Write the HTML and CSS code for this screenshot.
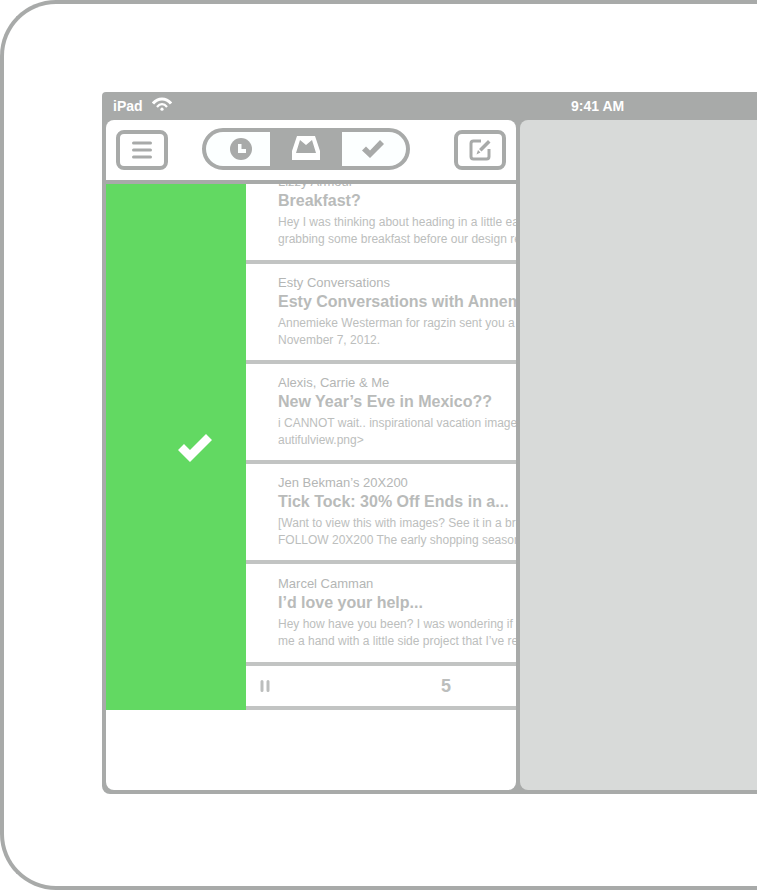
FILE: index.html
```html
<!DOCTYPE html>
<html lang="en">
<head>
<meta charset="utf-8">
<title>Mailbox</title>
<link rel="stylesheet" href="styles.css">
</head>
<body>
<div class="device">
  <div class="screen">
    <header class="status">
      <div class="carrier">
        <span>iPad</span>
        <svg width="20" height="14" viewBox="0 0 20 14" fill="none" stroke="#fff" stroke-width="3">
          <path d="M1 6.500C6 0.500 14 0.500 19 6.500"/>
          <path d="M5 10C8 6.200 12 6.200 15 10" stroke-width="2.200"/>
          <circle cx="10" cy="12.200" r="1.600" fill="#fff" stroke="none"/>
        </svg>
      </div>
      <time class="clock">9:41 AM</time>
    </header>
    <div class="panes">
      <main class="inbox">
        <nav class="toolbar">
          <button class="tool" type="button" aria-label="Menu">
            <svg width="20" height="18" viewBox="0 0 20 18" stroke="#a8aaa9" stroke-width="3" stroke-linecap="round"><path d="M1.500 2h17M1.500 9h17M1.500 16h17"/></svg>
          </button>
          <div class="segments">
            <button class="segment segment-first" type="button" aria-label="Later">
              <svg width="22" height="22" viewBox="0 0 22 22"><circle cx="11" cy="11" r="11" fill="#a8aaa9"/><path d="M8 6h3.500v5H16v4H8z" fill="#fcffff"/></svg>
            </button>
            <button class="segment segment-active" type="button" aria-label="Inbox">
              <svg width="28" height="24" viewBox="0 0 28 24"><path d="M5 0h18l5 15v9H0V15z" fill="#fff"/><path d="M4 17L8 4l6 5 6-5 4 13z" fill="#a8aaa9"/></svg>
            </button>
            <button class="segment segment-last" type="button" aria-label="Done">
              <svg width="22" height="18" viewBox="0 0 22 18"><path d="M0 10.500L4 6.500l4 4L18 0l4 4L8 18z" fill="#a8aaa9"/></svg>
            </button>
          </div>
          <button class="tool tool-end" type="button" aria-label="Compose">
            <svg width="22" height="22" viewBox="0 0 22 22"><path d="M12 2H4.500Q2 2 2 4.500v13Q2 20 4.500 20h13q2.500 0 2.500-2.500V10" fill="none" stroke="#a8aaa9" stroke-width="3"/><path d="M7.500 15.500l1.500-4.500 2.500 2.500zM10 10l9-9 2.500 2.500-9 9z" fill="#a8aaa9"/></svg>
          </button>
        </nav>
        <div class="mail">
          <div class="archive">
            <svg width="34" height="28" viewBox="0 0 34 28"><path d="M0 16l6-6 6 6L28 0l6 6L12 28z" fill="#fff"/></svg>
          </div>
          <div class="list">
            <article class="message message-scrolled">
              <p class="sender">Lizzy Armour</p>
              <h2 class="subject">Breakfast?</h2>
              <p class="preview">Hey I was thinking about heading in a little early<br>grabbing some breakfast before our design review</p>
            </article>
            <article class="message">
              <p class="sender">Esty Conversations</p>
              <h2 class="subject">Esty Conversations with Annemieke</h2>
              <p class="preview">Annemieke Westerman for ragzin sent you a conversation<br>November 7, 2012.</p>
            </article>
            <article class="message">
              <p class="sender">Alexis, Carrie &amp; Me</p>
              <h2 class="subject">New Year’s Eve in Mexico??</h2>
              <p class="preview">i CANNOT wait.. inspirational vacation images<br>autifulview.png&gt;</p>
            </article>
            <article class="message">
              <p class="sender">Jen Bekman’s 20X200</p>
              <h2 class="subject">Tick Tock: 30% Off Ends in a...</h2>
              <p class="preview">[Want to view this with images? See it in a browser<br>FOLLOW 20X200 The early shopping season</p>
            </article>
            <article class="message message-last">
              <p class="sender">Marcel Camman</p>
              <h2 class="subject">I’d love your help...</h2>
              <p class="preview">Hey how have you been? I was wondering if you<br>me a hand with a little side project that I’ve really</p>
            </article>
            <footer class="summary">
              <svg width="10" height="12" viewBox="0 0 10 12" stroke="#bcbebd" stroke-width="3" stroke-linecap="round"><path d="M2 1.500v9M8 1.500v9"/></svg>
              <span class="count">5</span>
            </footer>
          </div>
        </div>
      </main>
      <section class="detail"></section>
    </div>
  </div>
</div>
</body>
</html>
```

FILE: styles.css
```css
* {
  box-sizing: border-box;
}

body {
  margin: 0;
  background: #fff;
  font-family: "Liberation Sans", Arial, sans-serif;
}

h2,
p {
  margin: 0;
}

button {
  margin: 0;
  padding: 0;
  display: flex;
  align-items: center;
  justify-content: center;
}

svg {
  display: block;
  flex: none;
}

.device {
  display: flex;
  min-height: 100vh;
  margin-right: 23px;
  padding: 88px 0 92px 98px;
  border: 4px solid #a8aaa9;
  border-right: 0;
  border-radius: 56px 0 0 56px;
}

.screen {
  flex: 1;
  min-width: 0;
  display: flex;
  flex-direction: column;
  padding: 0 0 4px 4px;
  background: #a8aaa9;
  border-radius: 4px 0 0 8px;
}

.status {
  display: grid;
  grid-template-columns: 458px 1fr;
  align-items: center;
  height: 28px;
  padding-left: 7px;
  color: #fff;
  font-size: 14px;
  font-weight: bold;
}

.carrier {
  display: flex;
  align-items: center;
  gap: 9px;
}

.carrier svg {
  margin-bottom: 4px;
}

.panes {
  flex: 1;
  display: flex;
  gap: 4px;
}

.inbox {
  flex: 0 0 410px;
  overflow: hidden;
  background: #fff;
  border-radius: 8px;
}

.detail {
  flex: 1;
  background: #d8dad9;
  border-radius: 8px 0 0 8px;
}

.toolbar {
  display: flex;
  align-items: flex-end;
  height: 64px;
  padding: 0 10px 10px;
  border-bottom: 4px solid #a8aaa9;
}

.tool {
  width: 52px;
  height: 40px;
  background: #fff;
  border: 4px solid #a8aaa9;
  border-radius: 8px;
}

.tool-end {
  margin-left: auto;
}

.segments {
  display: flex;
  height: 42px;
  margin-left: 34px;
  border: 4px solid #a8aaa9;
  border-radius: 21px;
  overflow: hidden;
  background: #a8aaa9;
}

.segment {
  width: 64px;
  border: 0;
  background: #fcffff;
}

.segment-first {
  padding-left: 6px;
}

.segment-active {
  width: 72px;
  padding-bottom: 2px;
  background: #a8aaa9;
}

.segment-last {
  padding-right: 2px;
}

.mail {
  display: flex;
}

.archive {
  flex: 0 0 140px;
  display: flex;
  align-items: center;
  justify-content: center;
  padding: 2px 0 0 38px;
  background: #62d962;
}

.list {
  flex: 1;
  min-width: 0;
  overflow: hidden;
}

.message {
  padding: 11px 0 11px 32px;
  border-bottom: 4px solid #c2c4c3;
  white-space: nowrap;
}

.message-scrolled {
  margin-top: -21px;
  padding-bottom: 12px;
}

.message-last {
  padding-top: 12px;
  padding-bottom: 12px;
}

.sender {
  color: #b4b6b5;
  font-size: 13px;
  line-height: 16px;
}

.subject {
  margin-bottom: 2px;
  color: #b9bbba;
  font-size: 16px;
  line-height: 22px;
}

.preview {
  color: #bcbebd;
  font-size: 12px;
  line-height: 17px;
}

.summary {
  display: flex;
  align-items: center;
  justify-content: space-between;
  height: 44px;
  padding: 0 65px 0 14px;
  border-bottom: 4px solid #c2c4c3;
}

.count {
  color: #bcbebd;
  font-size: 18px;
  font-weight: bold;
}
```
